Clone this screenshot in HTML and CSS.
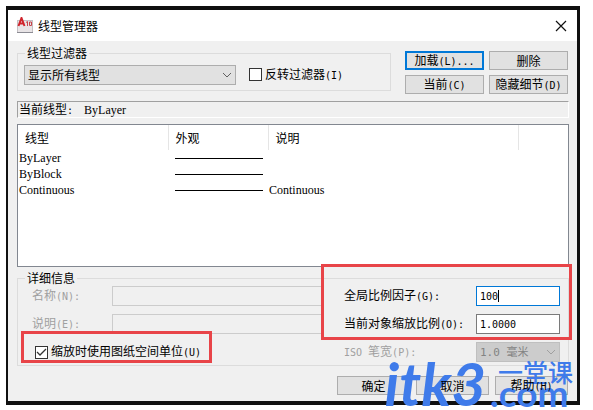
FILE: index.html
```html
<!DOCTYPE html>
<html lang="zh-CN">
<head>
  <meta charset="UTF-8" />
  <meta name="viewport" content="width=device-width, initial-scale=1.0" />
  <title>线型管理器</title>
  <link rel="stylesheet" href="styles.css">
</head>
<body>
  <div class="dialog">
    <header class="titlebar">
      <svg class="app-icon" width="16" height="17" viewBox="0 0 16 17">
        <rect x="0.5" y="3.5" width="15" height="12" fill="#e8e4e6" stroke="#c4c0c4" />
        <path d="M0 15.500H16" stroke="#8c8c94" />
        <path d="M1.500 9L4.500 1L7.500 9M3 6.500H6.500" fill="none" stroke="#d0242c" stroke-width="2" />
        <path d="M9 5.500L10.500 4.500V9M12.500 5H14.500V8.500H12.500Z" fill="none" stroke="#c8434b" />
      </svg>
      <h1>线型管理器</h1>
      <button class="close" aria-label="关闭">
        <svg width="12" height="12" viewBox="0 0 12 12"><path d="M1 1L11 11M11 1L1 11" stroke="#111" stroke-width="1.2" /></svg>
      </button>
    </header>

    <main>
      <div class="top">
        <fieldset class="filter">
          <legend>线型过滤器</legend>
          <select class="drop" aria-label="线型过滤器">
            <option>显示所有线型</option>
          </select>
          <input type="checkbox" id="invert">
          <label for="invert">反转过滤器<span class="en">(I)</span></label>
        </fieldset>
        <div class="actions">
          <button class="default">加载<span class="en">(L)...</span></button>
          <button>删除</button>
          <button>当前<span class="en">(C)</span></button>
          <button>隐藏细节<span class="en">(D)</span></button>
        </div>
      </div>

      <p class="current">当前线型<span class="en">: </span><span class="value">ByLayer</span></p>

      <div class="list">
        <table>
          <thead>
            <tr><th class="col-name">线型</th><th class="col-look">外观</th><th class="col-desc">说明</th><th></th></tr>
          </thead>
          <tbody>
            <tr><td>ByLayer</td><td><hr></td><td></td><td></td></tr>
            <tr><td>ByBlock</td><td><hr></td><td></td><td></td></tr>
            <tr><td>Continuous</td><td><hr></td><td>Continuous</td><td></td></tr>
          </tbody>
        </table>
      </div>

      <fieldset class="details">
        <legend>详细信息</legend>
        <div class="left">
          <div class="row off">
            <label for="name">名称<span class="en">(N):</span></label>
            <input type="text" id="name" disabled>
          </div>
          <div class="row off">
            <label for="desc">说明<span class="en">(E):</span></label>
            <input type="text" id="desc" disabled>
          </div>
          <div class="row units">
            <input type="checkbox" id="units" checked>
            <label for="units">缩放时使用图纸空间单位<span class="en">(U)</span></label>
          </div>
        </div>
        <div class="right">
          <div class="row">
            <label for="global">全局比例因子<span class="en">(G):</span></label>
            <div class="field"><input type="text" id="global" class="focused" value="100"><span class="caret"></span></div>
          </div>
          <div class="row">
            <label for="scale">当前对象缩放比例<span class="en">(O):</span></label>
            <div class="field"><input type="text" id="scale" value="1.0000"></div>
          </div>
          <div class="row off">
            <label for="pen"><span class="en">ISO </span>笔宽<span class="en">(P):</span></label>
            <div class="field"><select id="pen" class="drop" disabled><option>1.0 毫米</option></select></div>
          </div>
        </div>
        <div class="mark mark-units"></div>
        <div class="mark mark-scale"></div>
      </fieldset>

      <footer>
        <button><span class="label">确定</span></button>
        <button><span class="label">取消</span></button>
        <button><span class="label">帮助<span class="en">(H)</span></span></button>
      </footer>
    </main>

    <div class="watermark">
      <span class="brand">itk3</span>
      <span class="side"><span class="cn">一堂课</span><span class="com">.com</span></span>
    </div>
  </div>
</body>
</html>
```

FILE: styles.css
```css
* {
  box-sizing: border-box;
}
body {
  margin: 0;
  padding: 6px 13px 5px 6px;
  background: #fff;
  color: #000;
  font: 12px/16px "Noto Sans CJK SC", sans-serif;
}
.en {
  font-family: "DejaVu Sans Mono", monospace;
  font-size: 10px;
}
.value, td {
  font-family: "Liberation Serif", serif;
  font-size: 12px;
}
.dialog {
  position: relative;
  border: solid #101010;
  border-width: 4px 3px 4px 2px;
  background: #f0f0f0;
}
.titlebar {
  display: flex;
  align-items: center;
  gap: 5px;
  height: 31px;
  padding: 0 9px;
  background: #fff;
}
h1 {
  flex: 1;
  margin: 0;
  font-size: 12px;
  font-weight: normal;
}
button, input, select {
  margin: 0;
  font: inherit;
  color: inherit;
}
button {
  height: 19px;
  padding: 0;
  border: 1px solid #adadad;
  background: #e1e1e1;
  line-height: 16px;
}
.close {
  width: 14px;
  border: 0;
  background: none;
}
.close svg {
  display: block;
  margin: auto;
}
main {
  padding: 6px 8px 6px 9px;
}
fieldset {
  min-width: 0;
  margin: 0;
  border: 1px solid #dcdcdc;
}
legend {
  margin-left: 1px;
  padding: 0 2px;
  line-height: 12px;
}
.top {
  display: flex;
  gap: 14px;
}
.filter {
  flex: 1;
  display: flex;
  align-items: center;
  height: 44px;
  padding: 0 6px;
}
.drop {
  appearance: none;
  width: 212px;
  height: 20px;
  padding: 0 3px;
  border: 1px solid #adadad;
  border-radius: 0;
  background: #e1e1e1 url("data:image/svg+xml,%3Csvg xmlns='http://www.w3.org/2000/svg' width='10' height='6'%3E%3Cpath d='M1 1L5 5L9 1' fill='none' stroke='%23606060'/%3E%3C/svg%3E") no-repeat right 3px center;
}
.filter .drop {
  margin-right: 13px;
}
input[type="checkbox"] {
  appearance: none;
  width: 13px;
  height: 13px;
  margin-right: 3px;
  border: 1px solid #333;
  background: #fff;
}
input[type="checkbox"]:checked {
  background: #fff url("data:image/svg+xml,%3Csvg xmlns='http://www.w3.org/2000/svg' width='11' height='11'%3E%3Cpath d='M1 5L4 8L10 2' fill='none' stroke='%23333' stroke-width='1.3'/%3E%3C/svg%3E") no-repeat center;
}
.actions {
  display: grid;
  grid-template-columns: 79px 79px;
  gap: 5px;
  align-content: start;
  padding: 4px 1px 0 0;
}
.default {
  border: 2px solid #0078d7;
  line-height: 14px;
}
.current {
  height: 17px;
  margin: 7px 0 6px;
  padding-left: 1px;
  border: 1px solid #fff;
  border-top-color: #a0a0a0;
  border-left-color: #a0a0a0;
  line-height: 14px;
}
.value {
  margin-left: 5px;
}
.list {
  height: 143px;
  border: 1px solid #828790;
  background: #fff;
}
table {
  width: 100%;
  border-collapse: collapse;
  table-layout: fixed;
}
th {
  height: 25px;
  padding: 0 7px;
  border-right: 1px solid #e5e5e5;
  font-weight: normal;
  text-align: left;
}
th:last-child {
  border: 0;
}
.col-name {
  width: 150px;
}
.col-look {
  width: 100px;
}
.col-desc {
  width: 250px;
}
td {
  height: 16px;
  padding: 0 1px;
  line-height: 16px;
}
hr {
  margin: 0 4px 0 6px;
  border: 0;
  border-top: 1px solid #000;
}
.details {
  position: relative;
  display: flex;
  height: 94px;
  margin-top: 5px;
  padding: 2px 8px 0 14px;
}
.details legend {
  margin-left: -7px;
}
.left {
  flex: 1;
}
.right {
  width: 216px;
  margin-left: 22px;
}
.row {
  display: flex;
  align-items: center;
  height: 20px;
  margin-bottom: 8px;
}
.row label {
  flex: 1;
}
.row input[type="text"] {
  display: block;
  width: 84px;
  height: 20px;
  padding: 0 3px;
  border: 1px solid #7a7a7a;
  background: #fff;
  font: 10px "DejaVu Sans Mono", monospace;
}
.row input.focused[type="text"] {
  border-color: #0078d7;
}
.left .row input[type="text"] {
  width: 210px;
  border-color: #ccc;
  background: #f0f0f0;
}
.off {
  color: #a0a0a0;
}
.field {
  position: relative;
}
.caret {
  position: absolute;
  left: 22px;
  top: 4px;
  width: 1px;
  height: 12px;
  background: #000;
}
.right .drop {
  display: block;
  width: 84px;
  border-color: #bfbfbf;
  background-color: #ccc;
  background-image: url("data:image/svg+xml,%3Csvg xmlns='http://www.w3.org/2000/svg' width='10' height='6'%3E%3Cpath d='M1 1L5 5L9 1' fill='none' stroke='%23a0a0a0'/%3E%3C/svg%3E");
  color: #838383;
  opacity: 1;
  font: 11px "DejaVu Sans Mono", "Noto Sans CJK SC", monospace;
}
.units {
  padding-left: 3px;
}
.mark {
  position: absolute;
  border: 3px solid #e84448;
}
.mark-units {
  left: 3px;
  bottom: 2px;
  width: 191px;
  height: 32px;
}
.mark-scale {
  right: -4px;
  top: -20px;
  width: 251px;
  height: 76px;
}
footer {
  display: flex;
  justify-content: flex-end;
  gap: 6px;
  margin-top: 10px;
  padding-right: 1px;
}
footer button {
  width: 73px;
}
.label {
  position: relative;
  z-index: 1;
}
.watermark {
  position: absolute;
  right: 4px;
  bottom: -6px;
  display: flex;
  gap: 4px;
  color: #3f7bea;
}
.brand {
  font: italic bold 60px/48px Lato, sans-serif;
}
.side {
  display: flex;
  flex-direction: column;
}
.cn {
  padding-left: 8px;
  font-size: 25px;
  font-weight: 500;
  line-height: 24px;
}
.com {
  font: bold 37px/20px Lato, sans-serif;
}
```
